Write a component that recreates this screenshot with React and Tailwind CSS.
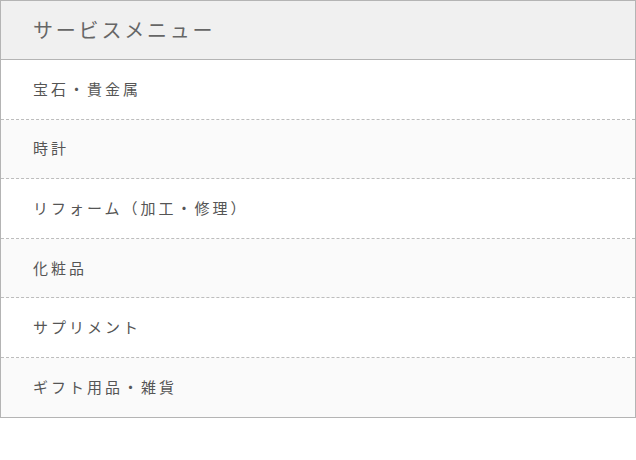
import React from "react";

const items = [
  "宝石・貴金属",
  "時計",
  "リフォーム（加工・修理）",
  "化粧品",
  "サプリメント",
  "ギフト用品・雑貨",
];

const App = () => {
  return (
    <div
      className="w-[636px] bg-white"
      style={{ fontFamily: '"Noto Sans CJK JP", "Noto Sans", sans-serif' }}
    >
      <div className="border border-[#b4b4b4]">
        <div className="h-[59px] flex items-center pl-[32px] pb-[1px] bg-[#f0f0f0] border-b border-[#b4b4b4]">
          <h2 className="text-[20px] tracking-[0.14em] text-[#666] leading-none">
            サービスメニュー
          </h2>
        </div>
        <ul>
          {items.map((item, i) => (
            <li
              key={item}
              className={`flex items-center pl-[32px] pb-[2px] text-[15px] tracking-[0.2em] text-[#555] leading-none ${
                i % 2 === 1 ? "bg-[#fafafa]" : "bg-white"
              } ${
                i < items.length - 1
                  ? "h-[59.6px] border-b border-dashed border-[#bdbdbd]"
                  : "h-[58.8px]"
              }`}
            >
              {item}
            </li>
          ))}
        </ul>
      </div>
    </div>
  );
};

export default App;
